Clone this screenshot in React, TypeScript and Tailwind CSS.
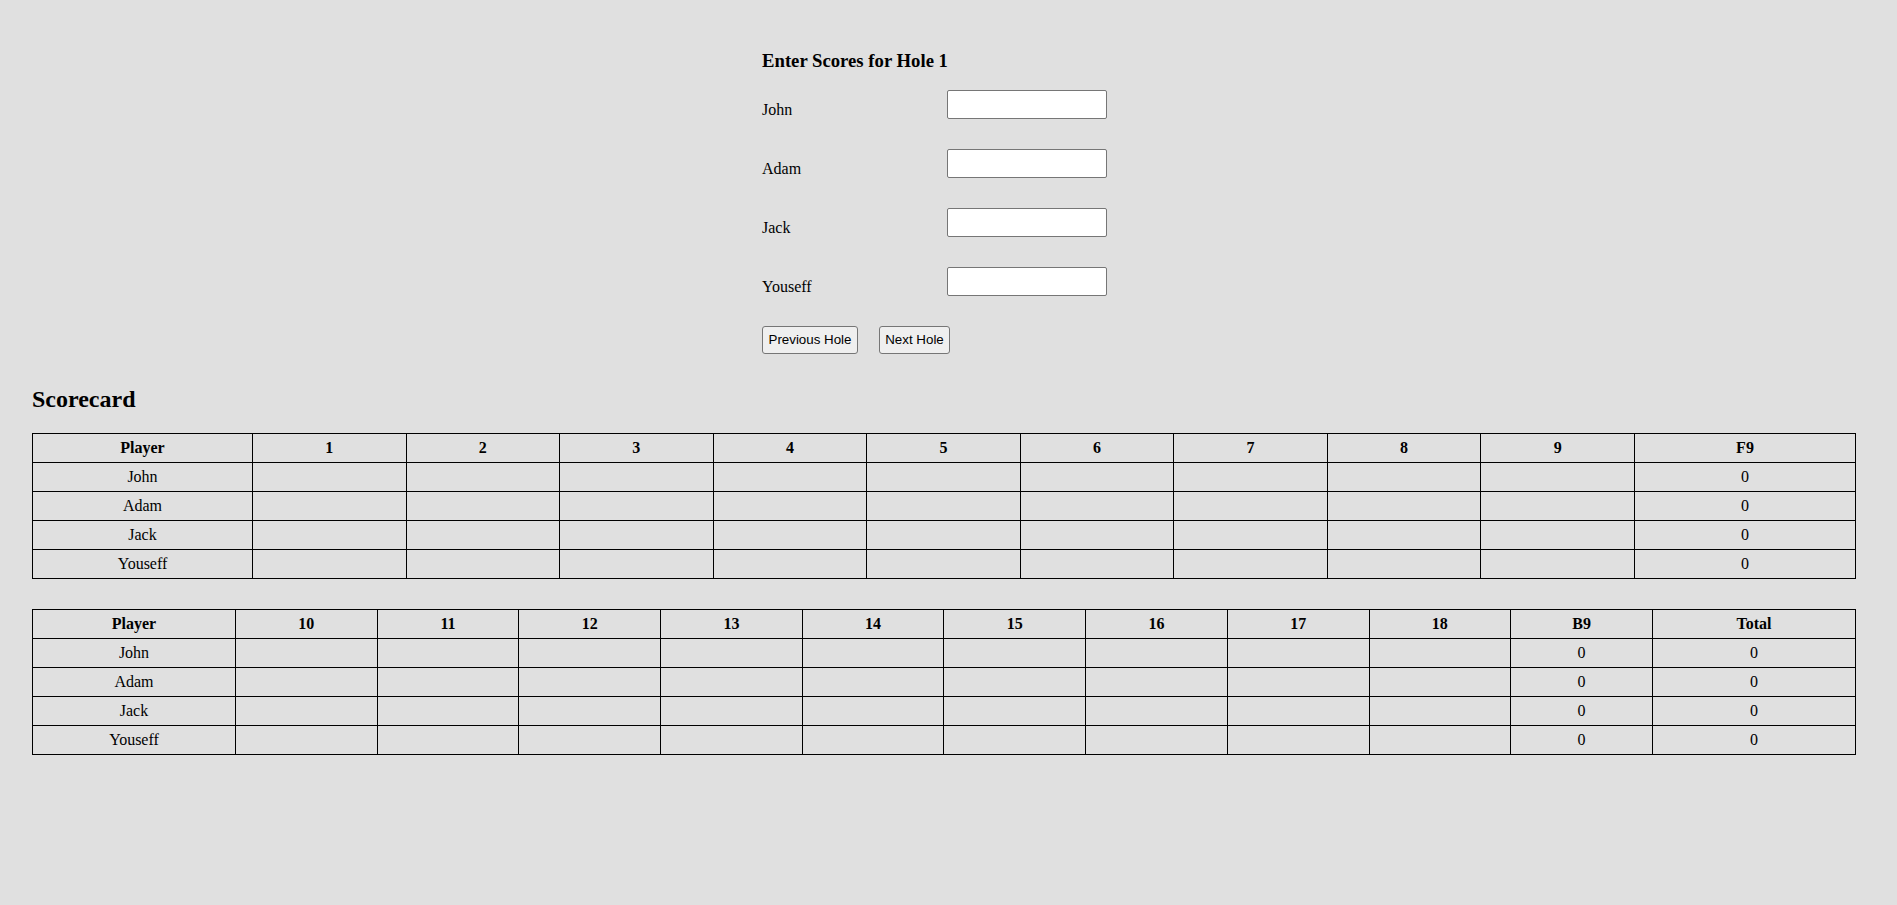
import { useState } from "react";

const players = ["John", "Adam", "Jack", "Youseff"];
const front = [1, 2, 3, 4, 5, 6, 7, 8, 9];
const back = [10, 11, 12, 13, 14, 15, 16, 17, 18];

const cell = "border border-black text-center py-[5px] leading-[18px]";

const ScoreTable = ({
	holes,
	summary,
}: {
	holes: number[];
	summary: string[];
}) => {
	const wide = holes[0] === 1 ? "w-[220px]" : "w-[203px]";
	return (
		<table className="w-full table-fixed border-collapse border border-black">
			<thead>
				<tr>
					<th className={`${cell} ${wide} font-bold`}>Player</th>
					{holes.map((h) => (
						<th key={h} className={`${cell} font-bold`}>
							{h}
						</th>
					))}
					{summary.map((s, i) => (
						<th
							key={s}
							className={`${cell} font-bold ${
								i === summary.length - 1
									? holes[0] === 1
										? "w-[221px]"
										: "w-[203px]"
									: ""
							}`}
						>
							{s}
						</th>
					))}
				</tr>
			</thead>
			<tbody>
				{players.map((p) => (
					<tr key={p}>
						<td className={cell}>{p}</td>
						{holes.map((h) => (
							<td key={h} className={cell}></td>
						))}
						{summary.map((s) => (
							<td key={s} className={cell}>
								0
							</td>
						))}
					</tr>
				))}
			</tbody>
		</table>
	);
};

export default function App() {
	const [scores, setScores] = useState<Record<string, string>>({});

	return (
		<div className="min-h-screen bg-[#e0e0e0] font-['Liberation_Serif',serif] text-[16px] text-black">
			<div className="mx-auto w-[373px] pt-[50px]">
				<h3 className="text-[18.72px] font-bold leading-[22px]">
					Enter Scores for Hole 1
				</h3>
				<div className="mt-[18px] flex flex-col gap-[30px]">
					{players.map((p) => (
						<div key={p} className="flex h-[29px] items-end">
							<label className="w-[185px] leading-[18px]">{p}</label>
							<input
								type="text"
								value={scores[p] ?? ""}
								onChange={(e) =>
									setScores({ ...scores, [p]: e.target.value })
								}
								className="h-[29px] w-[160px] rounded-[2px] border border-[#767676] bg-white px-1 font-['Liberation_Sans',sans-serif] text-[13.33px] outline-none"
							/>
						</div>
					))}
					<div className="flex h-[28px] gap-[21px] font-['Liberation_Sans',sans-serif] text-[13.33px]">
						<button
							type="button"
							className="h-[28px] w-[96px] rounded-[3px] border border-[#767676] bg-[#efefef]"
						>
							Previous Hole
						</button>
						<button
							type="button"
							className="h-[28px] w-[71px] rounded-[3px] border border-[#767676] bg-[#efefef]"
						>
							Next Hole
						</button>
					</div>
				</div>
			</div>

			<div className="pl-[32px] pr-[41px] pt-[31px]">
				<h2 className="text-[24px] font-bold leading-[28px]">Scorecard</h2>
				<div className="mt-[20px]">
					<ScoreTable holes={front} summary={["F9"]} />
				</div>
				<div className="mt-[30px]">
					<ScoreTable holes={back} summary={["B9", "Total"]} />
				</div>
			</div>
		</div>
	);
}
